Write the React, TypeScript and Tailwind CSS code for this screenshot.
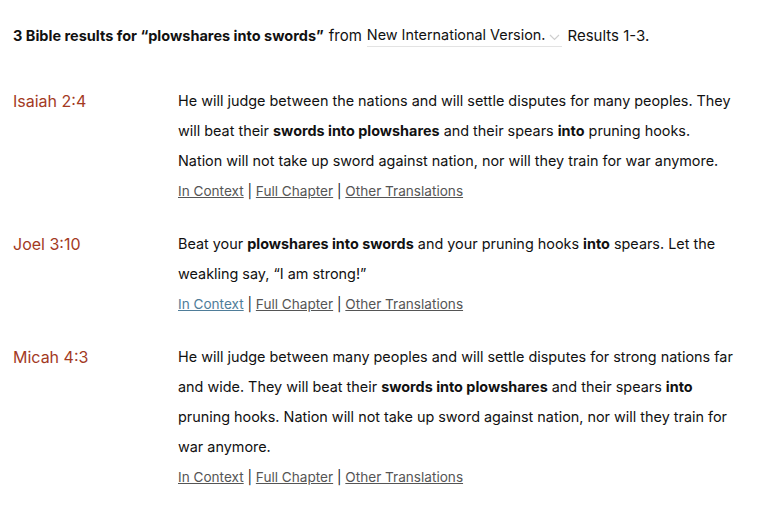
import React from 'react';

type Result = {
  ref: string;
  text: React.ReactNode;
  visited?: boolean;
};

const results: Result[] = [
  {
    ref: 'Isaiah 2:4',
    text: (
      <>
        He will judge between the nations and will settle disputes for many peoples. They will beat their{' '}
        <b>swords into plowshares</b> and their spears <b>into</b> pruning hooks. Nation will not take up sword
        against nation, nor will they train for war anymore.
      </>
    ),
  },
  {
    ref: 'Joel 3:10',
    text: (
      <>
        Beat your <b>plowshares into swords</b> and your pruning hooks <b>into</b> spears. Let the weakling say, “I am
        strong!”
      </>
    ),
    visited: true,
  },
  {
    ref: 'Micah 4:3',
    text: (
      <>
        He will judge between many peoples and will settle disputes for strong nations far and wide. They will beat
        their <b>swords into plowshares</b> and their spears <b>into</b> pruning hooks. Nation will not take up sword
        against nation, nor will they train for war anymore.
      </>
    ),
  },
];

export default function App() {
  return (
    <div className="min-h-screen bg-white text-[#111] font-['Inter',sans-serif] pl-[13px] pt-[24px]">
      {/* Search summary */}
      <div className="flex items-center text-[15px] leading-[22px]">
        <span className="font-bold text-[14.5px]">3 Bible results for “plowshares into swords”</span>
        <span className="ml-[5px]">from</span>
        <div className="ml-[5px] flex items-center border-b border-[#e3e3e3] pr-[2px]">
          <span className="text-[14.4px]">New International Version.</span>
          <svg className="ml-[4px] mt-[4px] w-[11px] h-[7px]" viewBox="0 0 11 7" fill="none">
            <path d="M1 1l4.5 4.5L10 1" stroke="#cfcfcf" strokeWidth="1.2" />
          </svg>
        </div>
        <span className="ml-[5px]">Results 1-3.</span>
      </div>

      {/* Results */}
      <div className="mt-[39px] flex flex-col gap-[23px]">
        {results.map((r) => (
          <div key={r.ref} className="flex">
            <div className="w-[165px] shrink-0 text-[16px] leading-[30px] text-[#a33a1f]">{r.ref}</div>
            <div className="w-[558px]">
              <p className="text-[14.4px] leading-[30px]">{r.text}</p>
              <div className="text-[13.6px] leading-[30px] text-[#222]">
                <a href="#" className={'underline ' + (r.visited ? 'text-[#4f7d99]' : 'text-[#555]')}>
                  In Context
                </a>{' '}
                | <a href="#" className="underline text-[#555]">Full Chapter</a> |{' '}
                <a href="#" className="underline text-[#555]">Other Translations</a>
              </div>
            </div>
          </div>
        ))}
      </div>
    </div>
  );
}
